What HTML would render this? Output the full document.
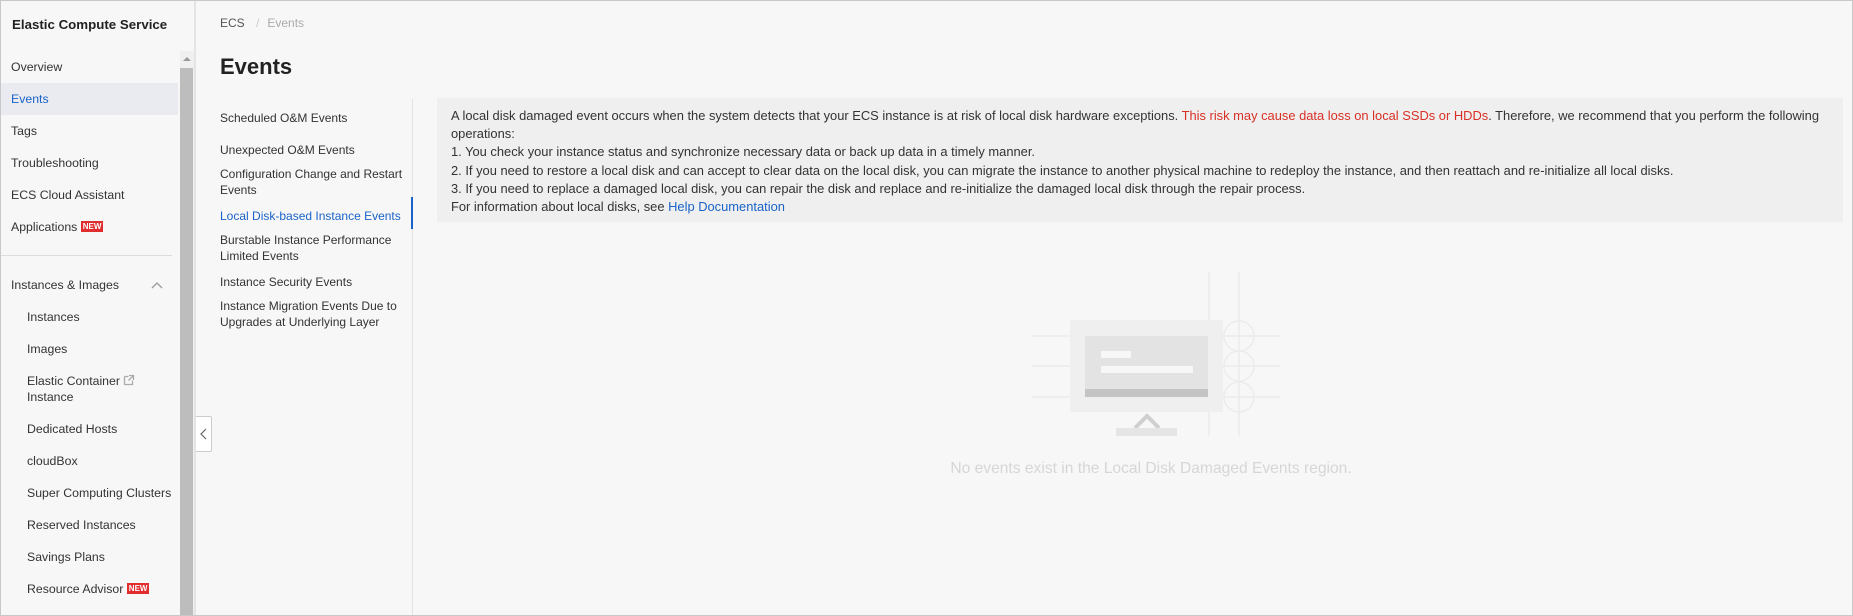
<!DOCTYPE html>
<html><head><meta charset="utf-8"><style>
*{margin:0;padding:0;box-sizing:border-box}
body{width:1853px;height:616px;overflow:hidden;background:#f7f7f7;font-family:"Liberation Sans",sans-serif;color:#333;position:relative}
.a{position:absolute;white-space:nowrap}
.frame{position:absolute;left:0;top:0;width:1853px;height:616px;border:1px solid #c8c8c8;pointer-events:none}
.side{position:absolute;left:0;top:0;width:180px;height:616px;background:#f7f7f7}
.sb{font-size:12.3px;color:#333}
.sub{font-size:12px;color:#333}
.note{position:absolute;left:437px;top:98px;width:1406px;height:124px;background:#efefef;font-size:12.9px;line-height:18.2px;padding:9px 14px;color:#333}
.note div{white-space:nowrap}
</style></head><body>
<div class="side">
<div class="a" style="left:12px;top:17px;font-size:13.3px;font-weight:bold;color:#222">Elastic Compute Service</div>
<div style="position:absolute;left:0;top:83px;width:178px;height:32px;background:#e9ebf0"></div>
<div class="a sb" style="left:11px;top:60px">Overview</div>
<div class="a sb" style="left:11px;top:92px;color:#1a63c8">Events</div>
<div class="a sb" style="left:11px;top:124px">Tags</div>
<div class="a sb" style="left:11px;top:156px">Troubleshooting</div>
<div class="a sb" style="left:11px;top:188px">ECS Cloud Assistant</div>
<div class="a sb" style="left:11px;top:220px">Applications <span style="display:inline-block;background:#e02e2e;color:#fff;font-size:8px;padding:1px 2px;vertical-align:2px;font-weight:bold">NEW</span></div>
<div style="position:absolute;left:0;top:255px;width:172px;height:1px;background:#ddd"></div>
<div class="a sb" style="left:11px;top:278px">Instances &amp; Images</div>
<svg class="a" style="left:150px;top:280px" width="14" height="10"><path d="M2 8 L7 3 L12 8" fill="none" stroke="#999" stroke-width="1.3"/></svg>
<div class="a sb" style="left:27px;top:310px">Instances</div>
<div class="a sb" style="left:27px;top:342px">Images</div>
<div class="a sb" style="left:27px;top:374px">Elastic Container <svg width="12" height="12" style="vertical-align:-1px"><path d="M1.5 2.5h4M1.5 2.5v8h8v-4" fill="none" stroke="#aaa" stroke-width="1.3"/><path d="M6 1.5h4.5v4.5M10.5 1.5L5.5 6.5" fill="none" stroke="#aaa" stroke-width="1.3"/></svg></div>
<div class="a sb" style="left:27px;top:390px">Instance</div>
<div class="a sb" style="left:27px;top:422px">Dedicated Hosts</div>
<div class="a sb" style="left:27px;top:454px">cloudBox</div>
<div class="a sb" style="left:27px;top:486px">Super Computing Clusters</div>
<div class="a sb" style="left:27px;top:518px">Reserved Instances</div>
<div class="a sb" style="left:27px;top:550px">Savings Plans</div>
<div class="a sb" style="left:27px;top:582px">Resource Advisor <span style="display:inline-block;background:#e02e2e;color:#fff;font-size:8px;padding:1px 2px;vertical-align:2px;font-weight:bold">NEW</span></div>
</div>
<div style="position:absolute;left:180px;top:51px;width:14px;height:565px;background:#f0f0f0"></div>
<div style="position:absolute;left:180px;top:68px;width:13px;height:548px;background:#bdbdbd"></div>
<svg class="a" style="left:181px;top:54px" width="12" height="10"><path d="M2 7 L6 3 L10 7Z" fill="#999"/></svg>
<div style="position:absolute;left:194px;top:0;width:2px;height:616px;background:#e4e4e4"></div>
<div style="position:absolute;left:196px;top:416px;width:16px;height:36px;background:#fff;border:1px solid #ccc;border-left:none;border-radius:0 2px 2px 0"></div>
<svg class="a" style="left:199px;top:428px" width="10" height="12"><path d="M7 1L2 6L7 11" fill="none" stroke="#666" stroke-width="1.2"/></svg>
<div class="a" style="left:220px;top:16px;font-size:12px;color:#555">ECS <span style="color:#ccc;margin:0 8px">/</span><span style="color:#aaa">Events</span></div>
<div class="a" style="left:220px;top:54px;font-size:22px;font-weight:bold;color:#222">Events</div>
<div style="position:absolute;left:412px;top:99px;width:1px;height:517px;background:#e2e2e2"></div>
<div style="position:absolute;left:411px;top:197px;width:2px;height:32px;background:#1a63c8"></div>
<div class="a sub" style="left:220px;top:111px">Scheduled O&amp;M Events</div>
<div class="a sub" style="left:220px;top:143px">Unexpected O&amp;M Events</div>
<div class="a sub" style="left:220px;top:167px">Configuration Change and Restart</div>
<div class="a sub" style="left:220px;top:183px">Events</div>
<div class="a sub" style="left:220px;top:209px;color:#1a63c8">Local Disk-based Instance Events</div>
<div class="a sub" style="left:220px;top:233px">Burstable Instance Performance</div>
<div class="a sub" style="left:220px;top:249px">Limited Events</div>
<div class="a sub" style="left:220px;top:275px">Instance Security Events</div>
<div class="a sub" style="left:220px;top:299px">Instance Migration Events Due to</div>
<div class="a sub" style="left:220px;top:315px">Upgrades at Underlying Layer</div>
<div class="note">
<div>A local disk damaged event occurs when the system detects that your ECS instance is at risk of local disk hardware exceptions. <span style="color:#d93026">This risk may cause data loss on local SSDs or HDDs</span>. Therefore, we recommend that you perform the following</div>
<div>operations:</div>
<div>1. You check your instance status and synchronize necessary data or back up data in a timely manner.</div>
<div>2. If you need to restore a local disk and can accept to clear data on the local disk, you can migrate the instance to another physical machine to redeploy the instance, and then reattach and re-initialize all local disks.</div>
<div>3. If you need to replace a damaged local disk, you can repair the disk and replace and re-initialize the damaged local disk through the repair process.</div>
<div>For information about local disks, see <span style="color:#1a63c8">Help Documentation</span></div>
</div>
<svg class="a" style="left:1020px;top:260px" width="260" height="190">
<g stroke="#ececec" stroke-width="1.5" fill="none">
<line x1="12" y1="76" x2="260" y2="76"/><line x1="12" y1="106" x2="260" y2="106"/><line x1="12" y1="137" x2="260" y2="137"/>
<line x1="189" y1="12" x2="189" y2="176"/><line x1="219" y1="12" x2="219" y2="176"/>
<circle cx="219" cy="76" r="15"/><circle cx="219" cy="106" r="15"/><circle cx="219" cy="137" r="15"/>
</g>
<rect x="50" y="60" width="153" height="92" fill="#efefef"/>
<rect x="65" y="76" width="123" height="61" fill="#e3e3e3"/>
<rect x="65" y="129" width="123" height="8" fill="#c4c4c4"/>
<rect x="81" y="91" width="30" height="7" fill="#f7f7f7"/>
<rect x="81" y="106" width="92" height="7" fill="#f7f7f7"/>
<path d="M115 168 L127 156 L139 168" fill="none" stroke="#cfcfcf" stroke-width="4"/>
<rect x="96" y="168" width="61" height="8" fill="#e5e5e5"/>
</svg>
<div class="a" style="left:0;width:2302px;text-align:center;top:460px;font-size:15.6px;color:#d6d6d6">No events exist in the Local Disk Damaged Events region.</div>
<div class="frame"></div>
</body></html>
